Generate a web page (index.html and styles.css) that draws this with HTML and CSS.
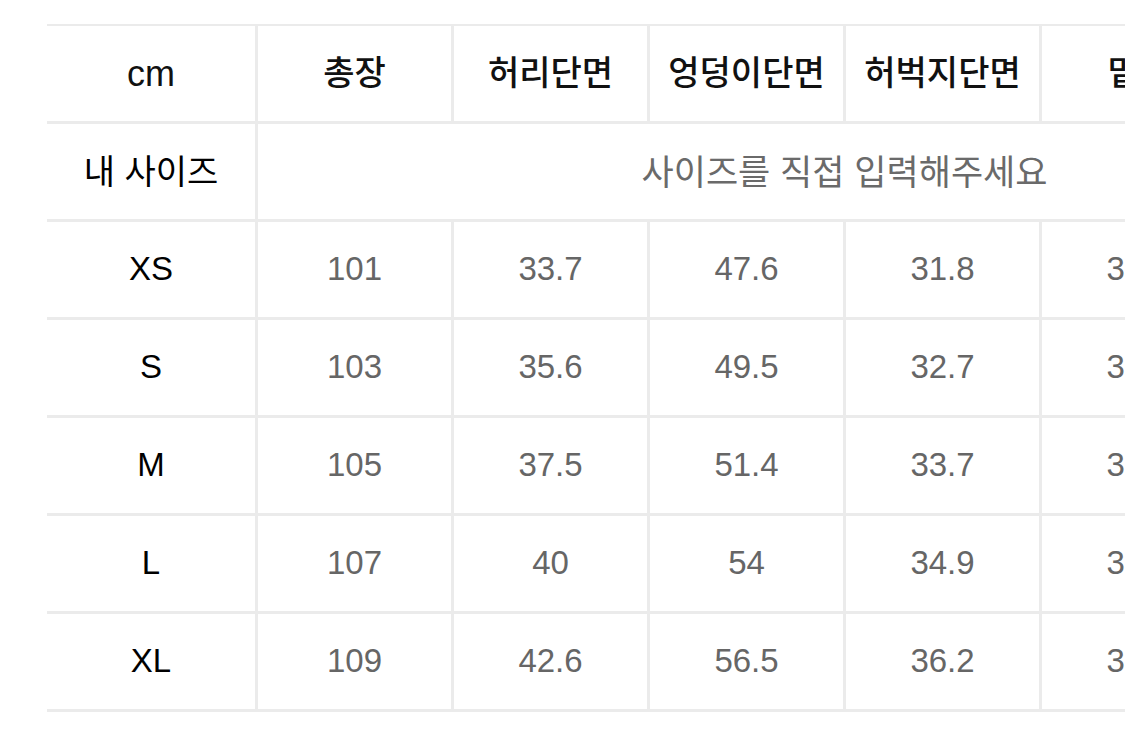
FILE: index.html
```html
<!DOCTYPE html>
<html lang="ko">
<head>
<meta charset="utf-8">
<title>사이즈표</title>
<link rel="stylesheet" href="styles.css">
</head>
<body>
<div class="size-table">
  <div class="cell head first unit">cm</div>
  <div class="cell head">총장</div>
  <div class="cell head">허리단면</div>
  <div class="cell head">엉덩이단면</div>
  <div class="cell head">허벅지단면</div>
  <div class="cell head">밑위</div>
  <div class="cell head">밑단단면</div>

  <div class="cell label first korean">내 사이즈</div>
  <div class="cell input span">사이즈를 직접 입력해주세요</div>

  <div class="cell label first">XS</div>
  <div class="cell">101</div><div class="cell">33.7</div><div class="cell">47.6</div><div class="cell">31.8</div><div class="cell">30.5</div><div class="cell">19.5</div>

  <div class="cell label first">S</div>
  <div class="cell">103</div><div class="cell">35.6</div><div class="cell">49.5</div><div class="cell">32.7</div><div class="cell">31.0</div><div class="cell">20.0</div>

  <div class="cell label first">M</div>
  <div class="cell">105</div><div class="cell">37.5</div><div class="cell">51.4</div><div class="cell">33.7</div><div class="cell">31.5</div><div class="cell">20.5</div>

  <div class="cell label first">L</div>
  <div class="cell">107</div><div class="cell">40</div><div class="cell">54</div><div class="cell">34.9</div><div class="cell">32.0</div><div class="cell">21.0</div>

  <div class="cell label first">XL</div>
  <div class="cell">109</div><div class="cell">42.6</div><div class="cell">56.5</div><div class="cell">36.2</div><div class="cell">32.5</div><div class="cell">21.5</div>
</div>
</body>
</html>
```
FILE: styles.css
```css
html, body {
  margin: 0;
  padding: 0;
  background: #ffffff;
  overflow: hidden;
}

body {
  width: 1125px;
  height: 739px;
  font-family: "Liberation Sans", "Noto Sans CJK KR", sans-serif;
}

.size-table {
  display: grid;
  grid-template-columns: 208px repeat(6, 196px);
  grid-auto-rows: 98px;
  width: max-content;
  margin: 24px 0 0 47px;
  border-top: 2px solid #ebebeb;
}

.cell {
  box-sizing: border-box;
  display: flex;
  align-items: center;
  justify-content: center;
  border-bottom: 3px solid #ebebeb;
  border-left: 3px solid #ebebeb;
  font-size: 33px;
  color: #666666;
  white-space: nowrap;
  padding-bottom: 2px;
}

.cell.first {
  border-left: none;
}

.cell.head {
  color: #111111;
  font-family: "Noto Sans CJK KR", sans-serif;
  font-weight: 500;
  font-size: 34px;
  padding-bottom: 6px;
}

.cell.head.unit {
  font-family: "Liberation Sans", sans-serif;
  font-weight: 400;
  font-size: 36px;
  padding-bottom: 0;
}

.cell.label {
  color: #000000;
}

.cell.label.korean {
  font-family: "Noto Sans CJK KR", sans-serif;
  font-size: 34px;
  padding-bottom: 4px;
}

.cell.input {
  grid-column: span 6;
  font-family: "Noto Sans CJK KR", sans-serif;
  font-size: 35px;
  color: #6a6a6a;
  padding-bottom: 4px;
}
```
